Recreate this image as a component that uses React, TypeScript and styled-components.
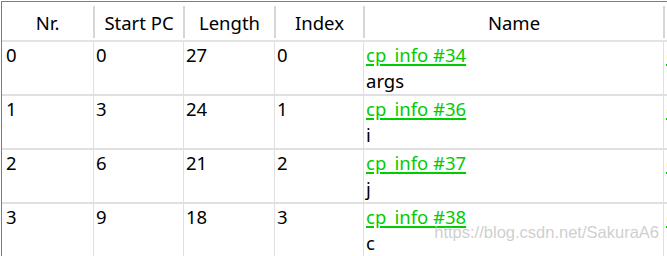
import React from "react";
import styled, { createGlobalStyle } from "styled-components";

const Global = createGlobalStyle`
  html, body { margin: 0; padding: 0; background: #ffffff; }
  body { font-family: "Noto Sans", "Noto Sans CJK SC", sans-serif; overflow: hidden; }
`;

const COLS = "91px 90px 91px 89px 300px 300px";

const Table = styled.div`
  position: relative;
  margin: 1px 0 0 1px;
  border-top: 1px solid #7d7d7d;
  border-left: 1px solid #7d7d7d;
  width: 666px;
  height: 254px;
  overflow: hidden;
  color: #000;
  font-size: 18.5px;
`;

const HeaderRow = styled.div`
  display: grid;
  grid-template-columns: ${COLS};
  height: 38px;
  border-bottom: 2px solid #e3e3e3;
`;

const HeaderCell = styled.div<{ $first?: boolean }>`
  box-sizing: border-box;
  margin-top: 4px;
  height: 32px;
  line-height: 32px;
  padding-top: 1px;
  text-align: center;
  white-space: nowrap;
  overflow: hidden;
  border-left: ${(p) => (p.$first ? "none" : "2px solid #d6d6d6")};
`;

const Row = styled.div`
  display: grid;
  grid-template-columns: ${COLS};
  height: 52px;
  border-bottom: 2px solid #e0e0e0;
`;

const Cell = styled.div<{ $first?: boolean }>`
  box-sizing: border-box;
  line-height: 26px;
  padding-left: ${(p) => (p.$first ? "4px" : "2px")};
  border-left: ${(p) => (p.$first ? "none" : "1px solid #e0e0e0")};
  white-space: nowrap;
  overflow: hidden;
  display: flex;
  flex-direction: column;
`;

const Link = styled.a`
  color: #00cc00;
  text-decoration: underline;
  text-decoration-thickness: 2px;
  text-underline-offset: 2px;
  cursor: pointer;
`;

const Watermark = styled.div`
  position: absolute;
  right: 9px;
  top: 221px;
  font-family: "Liberation Sans", Arial, sans-serif;
  font-size: 16.5px;
  color: rgba(190, 190, 190, 0.75);
  pointer-events: none;
  white-space: nowrap;
`;

const rows = [
  { nr: 0, pc: 0, len: 27, idx: 0, cp: 34, name: "args", sig: 35 },
  { nr: 1, pc: 3, len: 24, idx: 1, cp: 36, name: "i", sig: 25 },
  { nr: 2, pc: 6, len: 21, idx: 2, cp: 37, name: "j", sig: 25 },
  { nr: 3, pc: 9, len: 18, idx: 3, cp: 38, name: "c", sig: 39 },
];

export default function App() {
  return (
    <>
      <Global />
      <Table>
        <HeaderRow>
          <HeaderCell $first>Nr.</HeaderCell>
          <HeaderCell>Start PC</HeaderCell>
          <HeaderCell>Length</HeaderCell>
          <HeaderCell>Index</HeaderCell>
          <HeaderCell>Name</HeaderCell>
          <HeaderCell>Signature</HeaderCell>
        </HeaderRow>
        {rows.map((r) => (
          <Row key={r.nr}>
            <Cell $first>{r.nr}</Cell>
            <Cell>{r.pc}</Cell>
            <Cell>{r.len}</Cell>
            <Cell>{r.idx}</Cell>
            <Cell>
              <span>
                <Link>cp_info #{r.cp}</Link>
              </span>
              <span>{r.name}</span>
            </Cell>
            <Cell>
              <span>
                <Link>cp_info #{r.sig}</Link>
              </span>
            </Cell>
          </Row>
        ))}
        <Watermark>https://blog.csdn.net/SakuraA6</Watermark>
      </Table>
    </>
  );
}
